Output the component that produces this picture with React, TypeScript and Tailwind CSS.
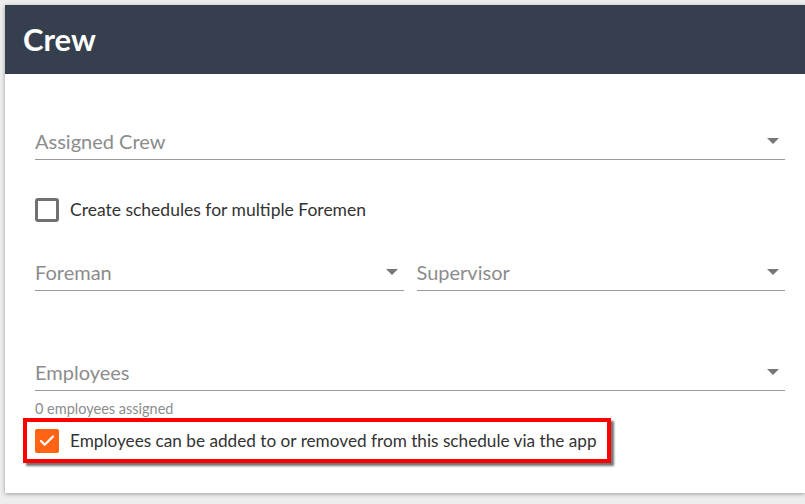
import { Check } from "lucide-react";

function Caret() {
  return (
    <svg width="12" height="6" viewBox="0 0 12 6" className="shrink-0">
      <path d="M0 0 L12 0 L6 6 Z" fill="#777777" />
    </svg>
  );
}

function SelectField({ label }: { label: string }) {
  return (
    <div className="flex items-center justify-between border-b border-[#9a9a9a] pb-[6px]">
      <span className="text-[20px] leading-[24px] text-[#8c8c8c]">{label}</span>
      <div className="mr-[6px]">
        <Caret />
      </div>
    </div>
  );
}

export default function App() {
  return (
    <div className="min-h-[504px] w-[805px] overflow-hidden bg-[#ededed] pl-[5px] pt-[5px] font-['Lato','Liberation_Sans',sans-serif]">
      <div className="w-[800px] bg-white shadow-[0_1px_4px_rgba(0,0,0,0.35)]">
        <div className="flex h-[69px] items-center bg-[#353f4d] px-[18px]">
          <h2 className="text-[31px] font-bold leading-none text-white">Crew</h2>
        </div>

        <div className="pb-[30px] pl-[30px] pr-[20px]">
          <div className="mt-[55px] pb-[1px]">
            <SelectField label="Assigned Crew" />
          </div>

          <label className="mt-[37px] flex items-center gap-[11px]">
            <span className="h-[24px] w-[24px] rounded-[3px] border-[3px] border-[#707070] bg-white" />
            <span className="text-[17.5px] leading-[24px] text-[#333333]">
              Create schedules for multiple Foremen
            </span>
          </label>

          <div className="mt-[38px] grid grid-cols-2 gap-[13px]">
            <SelectField label="Foreman" />
            <SelectField label="Supervisor" />
          </div>

          <div className="mt-[69px]">
            <SelectField label="Employees" />
          </div>
          <p className="mt-[10px] text-[14.5px] leading-[16px] text-[#8c8c8c]">0 employees assigned</p>

          <div className="-ml-[12px] mt-[1px] flex w-[588px] items-center gap-[11px] border-[4px] border-[#ff0000] pb-[6px] pl-[8px] pt-[7px] shadow-[3px_3px_2px_rgba(0,0,0,0.55)]">
            <span className="flex h-[24px] w-[24px] shrink-0 items-center justify-center rounded-[2px] bg-[#ff6414]">
              <Check size={18} strokeWidth={3} color="#ffffff" />
            </span>
            <span className="whitespace-nowrap text-[17.2px] leading-[24px] text-[#333333]">
              Employees can be added to or removed from this schedule via the app
            </span>
          </div>
        </div>
      </div>
    </div>
  );
}
